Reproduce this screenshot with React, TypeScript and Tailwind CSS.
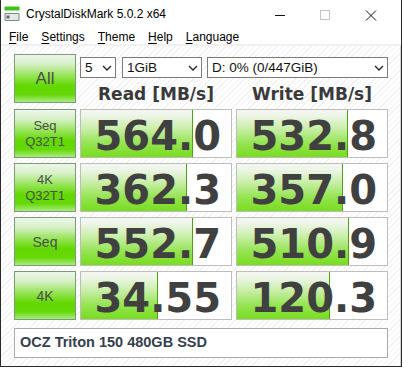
import React from "react";

type Row = {
  top: string;
  bottom?: string;
  read: string;
  write: string;
  readFill: number;
  writeFill: number;
};

const ROWS: Row[] = [
  { top: "Seq", bottom: "Q32T1", read: "564.0", write: "532.8", readFill: 112, writeFill: 111 },
  { top: "4K", bottom: "Q32T1", read: "362.3", write: "357.0", readFill: 106, writeFill: 106 },
  { top: "Seq", read: "552.7", write: "510.9", readFill: 112, writeFill: 112 },
  { top: "4K", read: "34.55", write: "120.3", readFill: 77, writeFill: 93 },
];

const sans = "font-['Liberation_Sans',Arial,sans-serif]";
const wide = "font-['DejaVu_Sans',Verdana,sans-serif]";

function TestButton({ children }: { children: React.ReactNode }) {
  return (
    <div
      className={`flex h-[49px] flex-col items-center justify-center border border-[#7c9a79] bg-[linear-gradient(to_bottom,#eef6ec_0%,#d6f0c6_20%,#8ce246_48%,#62d800_66%,#66d808_84%,#a8eb80_100%)] text-[#4a4f4a] ${sans}`}
    >
      {children}
    </div>
  );
}

function Chevron() {
  return (
    <svg width="10" height="6" viewBox="0 0 10 6" className="shrink-0">
      <path d="M1 1 L5 5 L9 1" fill="none" stroke="#222" strokeWidth="1.3" />
    </svg>
  );
}

function Select({ value, width }: { value: string; width: string }) {
  return (
    <div
      className={`flex h-[21px] items-center justify-between border border-[#7a7a7a] bg-white pl-[4px] pr-[3px] text-[13.5px] leading-none text-[#111] ${width} ${sans}`}
    >
      <span>{value}</span>
      <Chevron />
    </div>
  );
}

function ValueBox({ value, fill }: { value: string; fill: number }) {
  return (
    <div className="relative h-[49px] border border-[#bdbdbd] bg-white">
      <div
        className="absolute bottom-0 left-0 top-0 border-r border-[#4f9f1a] bg-[linear-gradient(to_bottom,#f4f6f2_0%,#eef5e8_12%,#c8eea6_40%,#96e454_70%,#78dc1e_100%)]"
        style={{ width: fill }}
      />
      <div
        className={`relative flex h-full items-center justify-end pr-[10px] pt-[5px] text-[40px] font-bold leading-none text-[#404040] ${wide}`}
      >
        {value}
      </div>
    </div>
  );
}

function DriveIcon() {
  return (
    <svg width="16" height="16" viewBox="0 0 16 16">
      <rect x="0.5" y="0.5" width="15" height="4" rx="0.5" fill="#3ec21a" />
      <rect x="0.5" y="7" width="15" height="8" rx="1" fill="#7a8a84" />
      <rect x="1.5" y="8" width="13" height="6" fill="#e4e8e6" />
      <rect x="2.5" y="9.5" width="3" height="3" fill="#5a6a64" />
    </svg>
  );
}

function Menu({ label }: { label: string }) {
  return (
    <span>
      <span className="underline underline-offset-2">{label[0]}</span>
      {label.slice(1)}
    </span>
  );
}

export default function App() {
  return (
    <div className="h-[368px] w-[404px] bg-white">
      <div className="flex h-[367px] w-[402px] flex-col border-x border-b border-[#2a2a2a] bg-white">
        {/* title bar */}
        <div className={`flex h-[29px] items-center text-[12px] text-black ${sans}`}>
          <div className="ml-[3px] mr-[6px] mt-[-2px]">
            <DriveIcon />
          </div>
          <span className="mt-[-2px]">CrystalDiskMark 5.0.2 x64</span>
          <div className="ml-auto flex items-center">
            <svg width="46" height="20" viewBox="0 0 46 20">
              <line x1="12" y1="10.5" x2="22" y2="10.5" stroke="#111" strokeWidth="1" />
            </svg>
            <svg width="46" height="20" viewBox="0 0 46 20">
              <rect x="11.5" y="5.5" width="9" height="9" fill="none" stroke="#c4c4c4" strokeWidth="1" />
            </svg>
            <svg width="46" height="20" viewBox="0 0 46 20">
              <path d="M11 5.5 L21 15.5 M21 5.5 L11 15.5" stroke="#111" strokeWidth="1" />
            </svg>
          </div>
        </div>

        {/* menu bar */}
        <div className={`flex h-[15px] items-center gap-[13px] pl-[8px] text-[12px] leading-none text-black ${sans}`}>
          <Menu label="File" />
          <Menu label="Settings" />
          <Menu label="Theme" />
          <Menu label="Help" />
          <Menu label="Language" />
        </div>
        <div className="h-[2px] bg-[#f0f0f0]" />

        {/* content */}
        <div className="flex-1 border-r border-[#d4d4d4] bg-[repeating-linear-gradient(135deg,#ffffff_0px,#ffffff_3px,#f1f1f1_3px,#f1f1f1_4px)] pl-[13px] pt-[8px]">
          <div className="grid grid-cols-[62px_152px_152px] gap-x-[4px] gap-y-[5px]">
            <TestButton>
              <span className="text-[17px] leading-none">All</span>
            </TestButton>
            <div className="col-span-2 flex flex-col">
              <div className="mt-[3px] flex">
                <Select value="5" width="w-[36px]" />
                <div className="w-[6px]" />
                <Select value="1GiB" width="w-[80px]" />
                <div className="w-[5px]" />
                <Select value="D: 0% (0/447GiB)" width="w-[181px]" />
              </div>
              <div
                className={`mt-[6px] grid grid-cols-2 gap-x-[4px] text-center text-[17px] font-bold leading-[20px] text-[#3a3a3a] ${wide}`}
              >
                <span>Read [MB/s]</span>
                <span>Write [MB/s]</span>
              </div>
            </div>

            {ROWS.map((row, i) => (
              <React.Fragment key={i}>
                <TestButton>
                  {row.bottom ? (
                    <>
                      <span className="text-[13px] leading-[16px]">{row.top}</span>
                      <span className="text-[13px] leading-[16px]">{row.bottom}</span>
                    </>
                  ) : (
                    <span className="text-[14px] leading-none">{row.top}</span>
                  )}
                </TestButton>
                <ValueBox value={row.read} fill={row.readFill} />
                <ValueBox value={row.write} fill={row.writeFill} />
              </React.Fragment>
            ))}
          </div>

          <div className="mt-[8px] flex h-[30px] w-[374px] items-center border border-[#a9a9a9] bg-white pl-[5px]">
            <span className={`text-[14.5px] font-bold text-[#36404e] ${sans}`}>
              OCZ Triton 150 480GB SSD
            </span>
          </div>
        </div>
      </div>
    </div>
  );
}
